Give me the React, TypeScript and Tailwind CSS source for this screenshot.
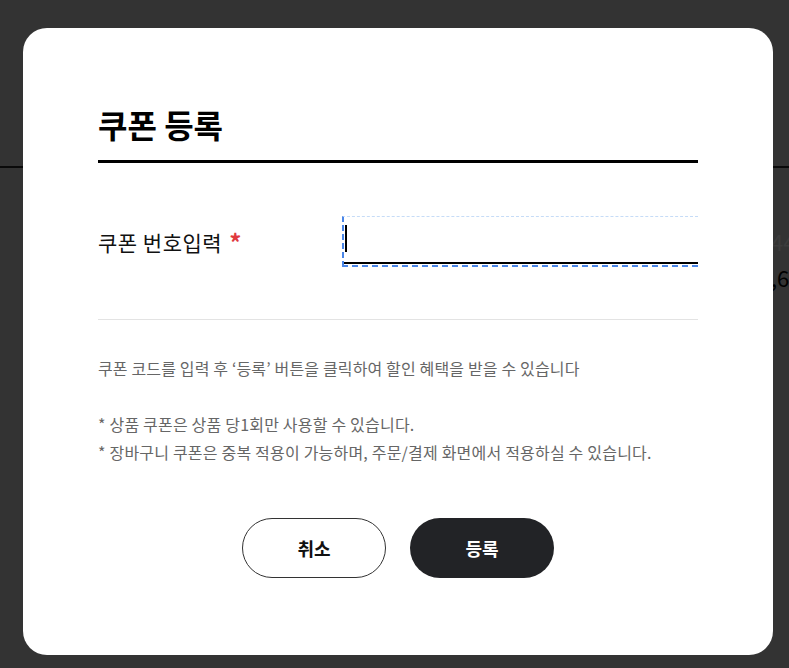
import React from "react";

const font = { fontFamily: '"Noto Sans CJK KR", "Noto Sans", sans-serif' };

export default function App() {
  return (
    <div className="relative w-[789px] h-[668px] overflow-hidden bg-[#333333]" style={font}>
      {/* page underneath the overlay */}
      <div className="h-[168px] border-b-[2px] border-[#0a0a0a]" />
      <div className="flex flex-col items-end pt-[58px] pr-0">
        <div className="w-[18px] overflow-hidden text-[22px] leading-[30px] text-[#3c3c3c] whitespace-nowrap">44</div>
        <div className="w-[18px] overflow-hidden text-[22px] leading-[30px] text-black whitespace-nowrap mt-[6px] text-right">,6</div>
      </div>

      {/* modal */}
      <div className="absolute left-[23px] top-[28px] w-[750px] h-[627px] rounded-[24px] bg-white px-[75px] pt-[74px] flex flex-col">
        <h2 className="text-[32px] leading-[44px] font-bold text-black border-b-[3px] border-black pb-[14px]">
          쿠폰 등록
        </h2>

        <div className="flex items-center mt-[53px]">
          <div className="w-[244px] flex items-center text-[21px] leading-[28px] tracking-[0.5px] text-[#111]">
            <span>쿠폰 번호입력</span>
            <span className="ml-[7px] text-[24px] leading-[28px] font-bold text-[#e0393e]">*</span>
          </div>
          <div className="relative flex-1 h-[51px] border-t border-dashed border-t-[#c6dcf7] border-l-2 border-l-[#4a86e8] ">
            <div className="absolute left-[1px] top-[8px] w-[2px] h-[27px] bg-black" />
            <div className="absolute left-0 right-0 bottom-[3px] h-[2px] bg-black" />
            <div className="absolute left-[-2px] right-0 bottom-0 h-[2px] border-b-2 border-dashed border-[#4a86e8]" />
          </div>
        </div>

        <div className="mt-[52px] h-px bg-[#e3e3e3]" />

        <p className="mt-[34px] text-[16px] leading-[28px] tracking-[0.15px] text-[#666]">
          쿠폰 코드를 입력 후 ‘등록’ 버튼을 클릭하여 할인 혜택을 받을 수 있습니다
        </p>
        <div className="mt-[28px] text-[16px] leading-[28px] tracking-[0.2px] text-[#666]">
          <p>* 상품 쿠폰은 상품 당1회만 사용할 수 있습니다.</p>
          <p>* 장바구니 쿠폰은 중복 적용이 가능하며, 주문/결제 화면에서 적용하실 수 있습니다.</p>
        </div>

        <div className="flex justify-center gap-[24px] mt-[52px]">
          <button className="w-[144px] h-[60px] rounded-full border border-[#333] bg-white text-[18px] font-bold text-[#111]">
            취소
          </button>
          <button className="w-[144px] h-[60px] rounded-full bg-[#222326] text-[18px] font-bold text-white">
            등록
          </button>
        </div>
      </div>
    </div>
  );
}
